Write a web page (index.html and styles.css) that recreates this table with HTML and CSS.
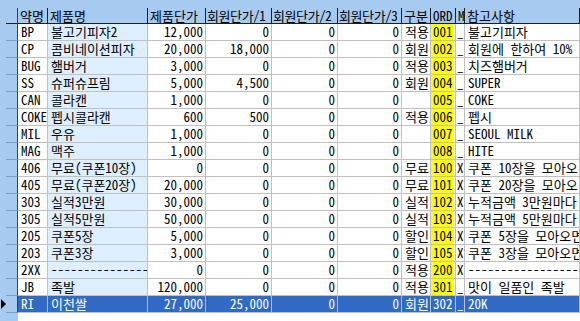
FILE: index.html
```html
<!DOCTYPE html>
<html lang="ko">
<head>
<meta charset="utf-8">
<link rel="stylesheet" href="styles.css">
</head>
<body>
<div class="grid">
  <div class="top"></div>
  <div class="row head">
    <div class="ind"></div>
    <div class="c">약명</div><div class="c">제품명</div><div class="c">제품단가</div><div class="c">회원단가/1</div><div class="c">회원단가/2</div><div class="c">회원단가/3</div><div class="c">구분</div><div class="c">ORD</div><div class="c">M</div><div class="c memo">참고사항</div>
  </div>
  <div class="row"><div class="ind"></div><div class="c">BP</div><div class="c nm">불고기피자2</div><div class="c n">12,000</div><div class="c n">0</div><div class="c n">0</div><div class="c n">0</div><div class="c">적용</div><div class="c ord">001</div><div class="c m">_</div><div class="c memo">불고기피자</div></div>
  <div class="row"><div class="ind"></div><div class="c">CP</div><div class="c nm">콤비네이션피자</div><div class="c n">20,000</div><div class="c n">18,000</div><div class="c n">0</div><div class="c n">0</div><div class="c">회원</div><div class="c ord">002</div><div class="c m">_</div><div class="c memo">회원에 한하여 10% 할</div></div>
  <div class="row"><div class="ind"></div><div class="c">BUG</div><div class="c nm">햄버거</div><div class="c n">3,000</div><div class="c n">0</div><div class="c n">0</div><div class="c n">0</div><div class="c">적용</div><div class="c ord">003</div><div class="c m">_</div><div class="c memo">치즈햄버거</div></div>
  <div class="row"><div class="ind"></div><div class="c">SS</div><div class="c nm">슈퍼슈프림</div><div class="c n">5,000</div><div class="c n">4,500</div><div class="c n">0</div><div class="c n">0</div><div class="c">회원</div><div class="c ord">004</div><div class="c m">_</div><div class="c memo">SUPER</div></div>
  <div class="row"><div class="ind"></div><div class="c">CAN</div><div class="c nm">콜라캔</div><div class="c n">1,000</div><div class="c n">0</div><div class="c n">0</div><div class="c n">0</div><div class="c"></div><div class="c ord">005</div><div class="c m">_</div><div class="c memo">COKE</div></div>
  <div class="row"><div class="ind"></div><div class="c">COKE</div><div class="c nm">펩시콜라캔</div><div class="c n">600</div><div class="c n">500</div><div class="c n">0</div><div class="c n">0</div><div class="c">적용</div><div class="c ord">006</div><div class="c m">_</div><div class="c memo">펩시</div></div>
  <div class="row"><div class="ind"></div><div class="c">MIL</div><div class="c nm">우유</div><div class="c n">1,000</div><div class="c n">0</div><div class="c n">0</div><div class="c n">0</div><div class="c"></div><div class="c ord">007</div><div class="c m">_</div><div class="c memo">SEOUL MILK</div></div>
  <div class="row"><div class="ind"></div><div class="c">MAG</div><div class="c nm">맥주</div><div class="c n">1,000</div><div class="c n">0</div><div class="c n">0</div><div class="c n">0</div><div class="c"></div><div class="c ord">008</div><div class="c m">_</div><div class="c memo">HITE</div></div>
  <div class="row"><div class="ind"></div><div class="c">406</div><div class="c nm">무료(쿠폰10장)</div><div class="c n">0</div><div class="c n">0</div><div class="c n">0</div><div class="c n">0</div><div class="c">무료</div><div class="c ord">100</div><div class="c m">X</div><div class="c memo">쿠폰 10장을 모아오</div></div>
  <div class="row"><div class="ind"></div><div class="c">405</div><div class="c nm">무료(쿠폰20장)</div><div class="c n">20,000</div><div class="c n">0</div><div class="c n">0</div><div class="c n">0</div><div class="c">무료</div><div class="c ord">101</div><div class="c m">X</div><div class="c memo">쿠폰 20장을 모아오</div></div>
  <div class="row"><div class="ind"></div><div class="c">303</div><div class="c nm">실적3만원</div><div class="c n">30,000</div><div class="c n">0</div><div class="c n">0</div><div class="c n">0</div><div class="c">실적</div><div class="c ord">102</div><div class="c m">X</div><div class="c memo">누적금액 3만원마다</div></div>
  <div class="row"><div class="ind"></div><div class="c">305</div><div class="c nm">실적5만원</div><div class="c n">50,000</div><div class="c n">0</div><div class="c n">0</div><div class="c n">0</div><div class="c">실적</div><div class="c ord">103</div><div class="c m">X</div><div class="c memo">누적금액 5만원마다</div></div>
  <div class="row"><div class="ind"></div><div class="c">205</div><div class="c nm">쿠폰5장</div><div class="c n">5,000</div><div class="c n">0</div><div class="c n">0</div><div class="c n">0</div><div class="c">할인</div><div class="c ord">104</div><div class="c m">X</div><div class="c memo">쿠폰 5장을 모아오면</div></div>
  <div class="row"><div class="ind"></div><div class="c">203</div><div class="c nm">쿠폰3장</div><div class="c n">3,000</div><div class="c n">0</div><div class="c n">0</div><div class="c n">0</div><div class="c">할인</div><div class="c ord">105</div><div class="c m">X</div><div class="c memo">쿠폰 3장을 모아오면</div></div>
  <div class="row"><div class="ind"></div><div class="c">2XX</div><div class="c nm">---------------</div><div class="c n">0</div><div class="c n">0</div><div class="c n">0</div><div class="c n">0</div><div class="c">적용</div><div class="c ord">200</div><div class="c m">X</div><div class="c memo">-----------------</div></div>
  <div class="row"><div class="ind"></div><div class="c">JB</div><div class="c nm">족발</div><div class="c n">120,000</div><div class="c n">0</div><div class="c n">0</div><div class="c n">0</div><div class="c">적용</div><div class="c ord">301</div><div class="c m">_</div><div class="c memo">맛이 일품인 족발</div></div>
  <div class="row sel"><div class="ind"><span class="arrow"></span></div><div class="c">RI</div><div class="c nm">이천쌀</div><div class="c n">27,000</div><div class="c n">25,000</div><div class="c n">0</div><div class="c n">0</div><div class="c">회원</div><div class="c ord">302</div><div class="c m">_</div><div class="c memo">20K</div></div>
</div>
</body>
</html>
```

FILE: styles.css
```css
html, body {
  margin: 0;
  padding: 0;
  width: 580px;
  height: 321px;
  overflow: hidden;
  background: #fff;
}
.grid {
  height: 321px;
  background: linear-gradient(to right, #a6caf0 18px, #fff 18px);
  font-family: "Noto Sans Mono CJK KR", "Noto Sans CJK KR", "DejaVu Sans Mono", monospace;
  font-size: 13px;
  color: #000;
}
.top {
  height: 8px;
  background: #a6caf0;
}
.row {
  display: grid;
  grid-template-columns: 6px 12px 30px 100px 58px 66px 66px 64px 29px 25px 9px 115px;
  height: 17px;
  width: 580px;
}
.row::before {
  content: "";
  background: #a6caf0;
}
.ind {
  box-sizing: border-box;
  background: #a6caf0;
  border-right: 1px solid #404040;
  border-bottom: 1px solid #7f9fc0;
  position: relative;
}
.c {
  box-sizing: border-box;
  border-right: 1px solid #c0c0c0;
  border-bottom: 1px solid #c0c0c0;
  height: 17px;
  line-height: 16px;
  padding: 0 2px 0 3px;
  white-space: nowrap;
  background: #fff;
}
.memo { overflow-x: clip; }
.nm { background: #ddeeff; overflow-x: clip; }
.n { text-align: right; padding-right: 2px; }
.ord { background: #ffff00; box-shadow: inset -1px 0 0 #fff; padding-left: 2px; }
.m { padding: 0 0 0 1px; }
.head { height: 16px; }
.head .c {
  height: 16px;
  background: #a6caf0;
  border-right: 1px solid #202020;
  border-bottom: 1px solid #202020;
  line-height: 15px;
  padding-left: 2px;
  overflow-x: clip;
}
.head .c:nth-child(5),
.head .c:nth-child(6),
.head .c:nth-child(7) {
  letter-spacing: -0.4px;
  padding-left: 1px;
}
.head .ind { border-bottom: 1px solid #202020; }
.sel .c {
  background: #316ac5;
  color: #fff;
  box-shadow: none;
}
.arrow {
  position: absolute;
  left: -5px;
  top: 3px;
  width: 0;
  height: 0;
  border-top: 5px solid transparent;
  border-bottom: 5px solid transparent;
  border-left: 5px solid #000;
}
```
